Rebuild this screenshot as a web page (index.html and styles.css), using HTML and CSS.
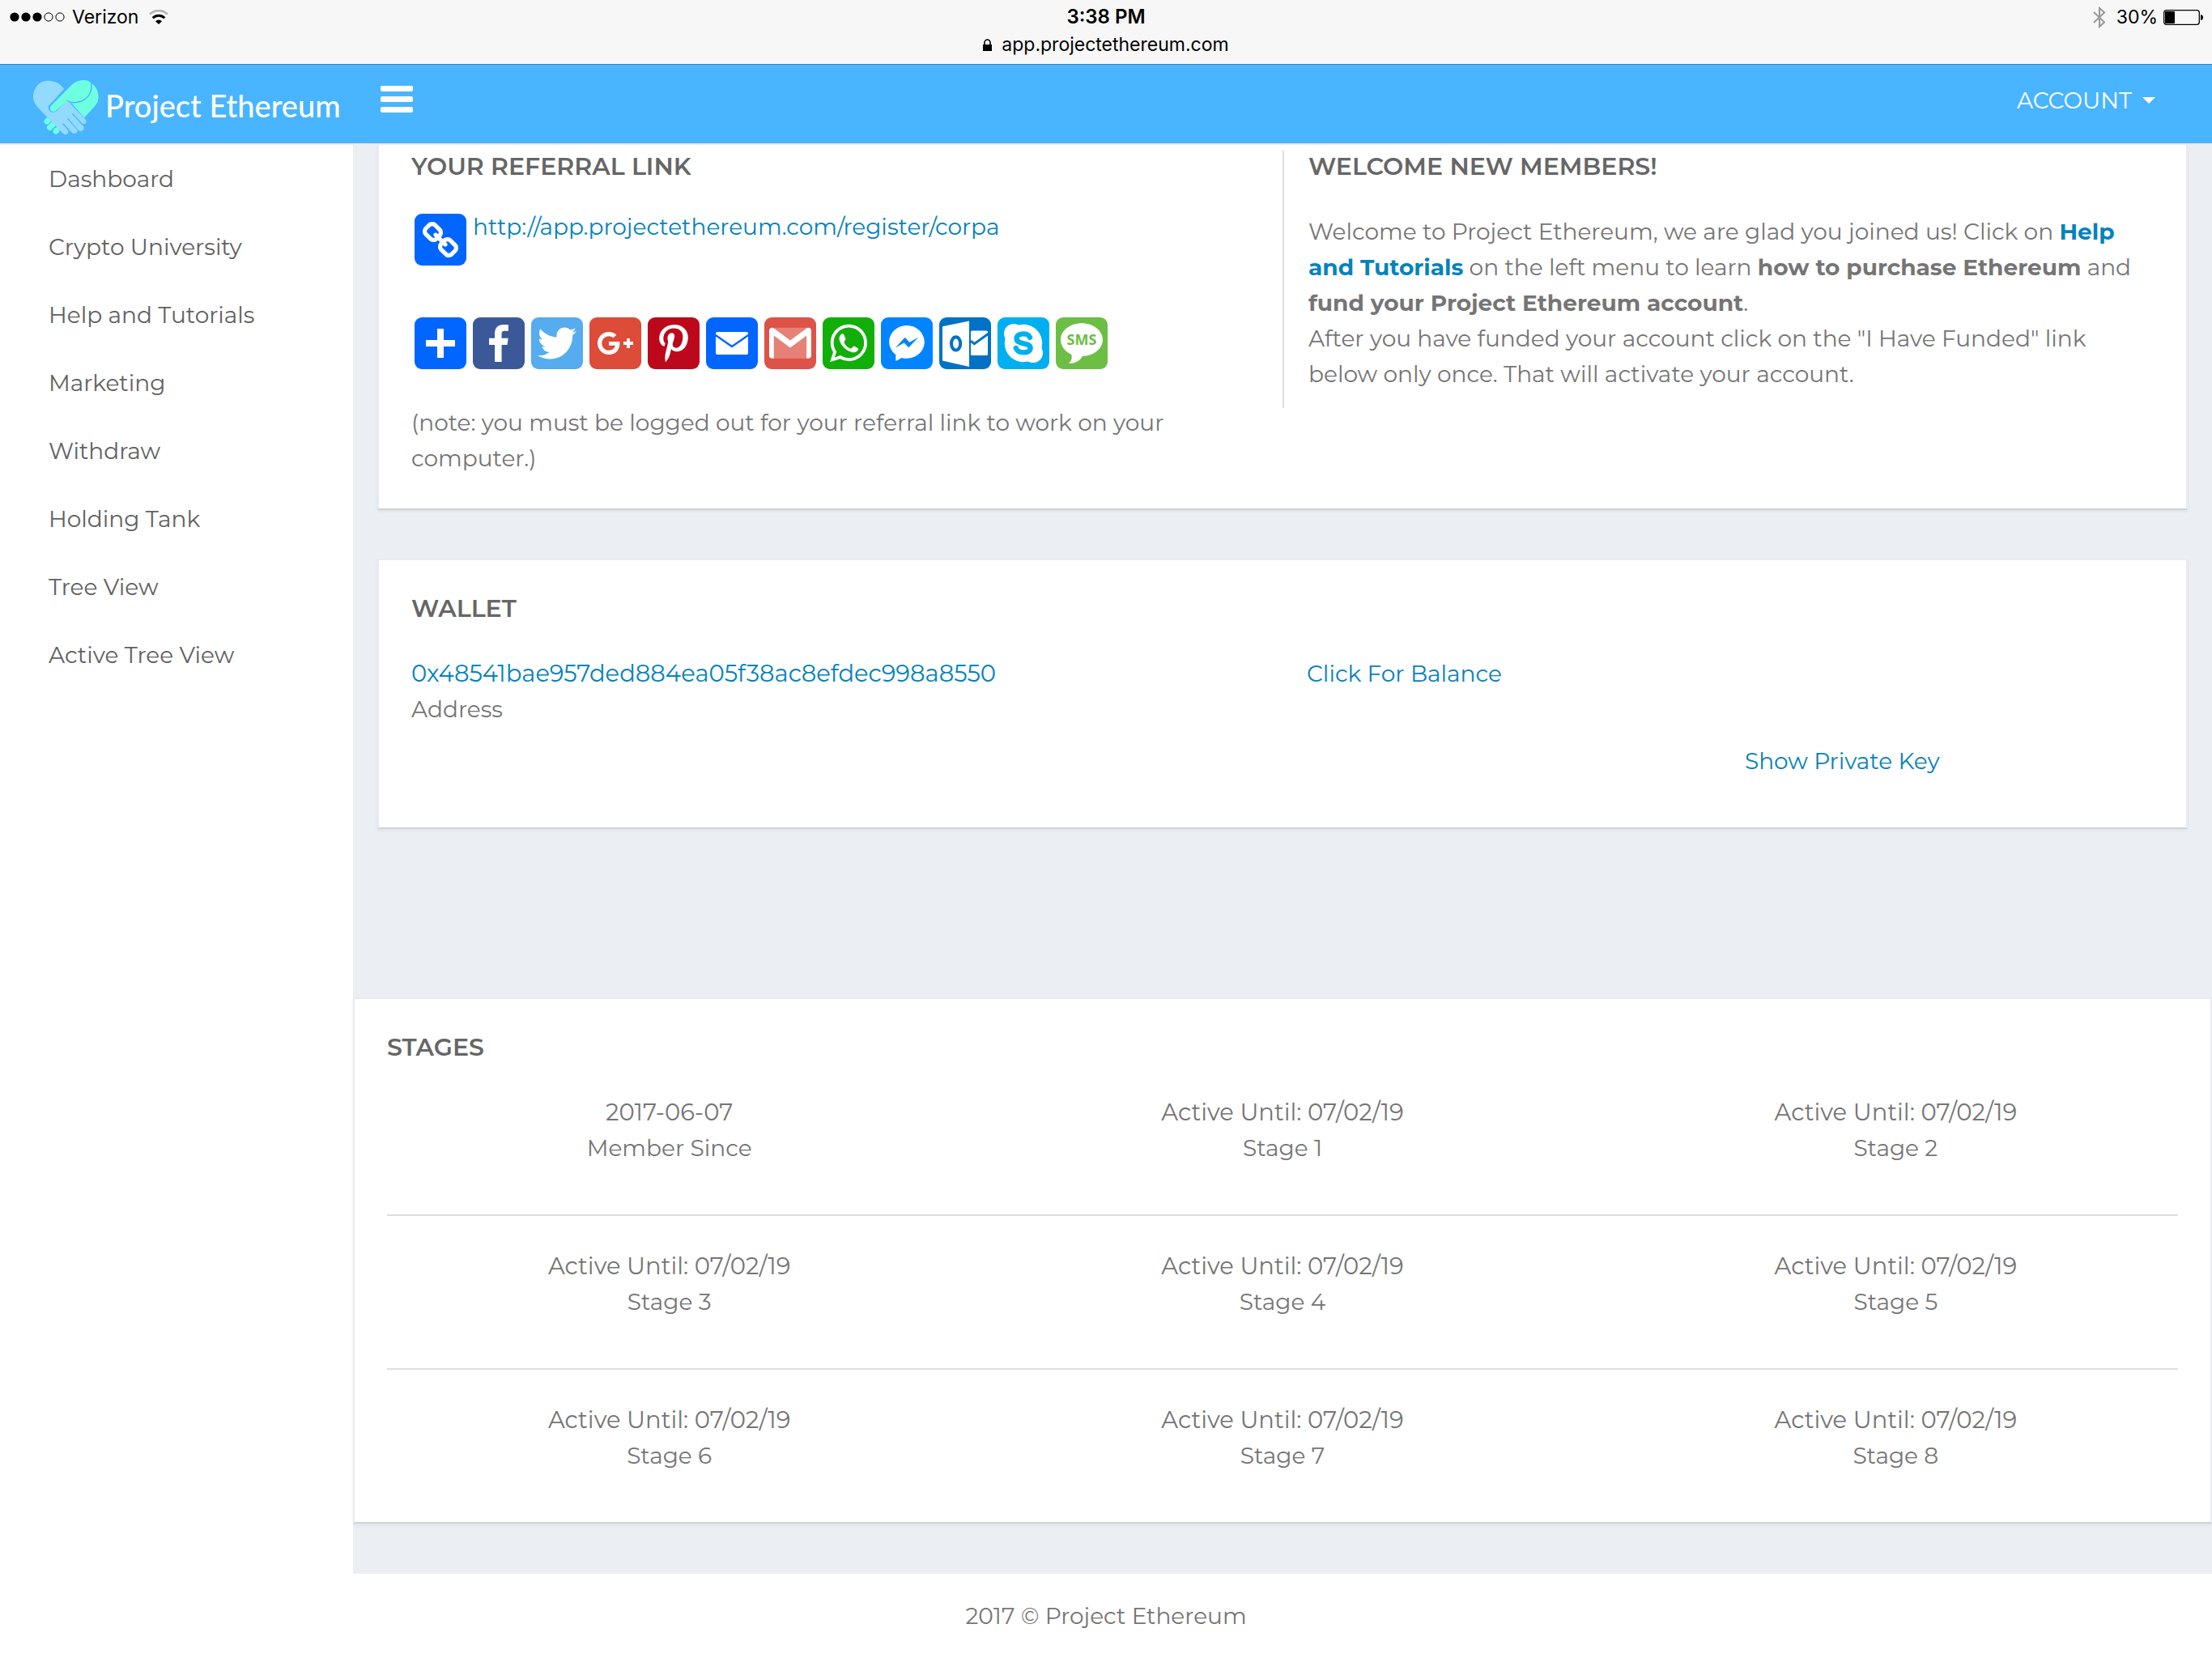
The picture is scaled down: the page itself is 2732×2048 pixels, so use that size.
FILE: index.html
```html
<!DOCTYPE html>
<html lang="en">
<head>
<meta charset="utf-8">
<title>Project Ethereum</title>
<meta name="viewport" content="width=device-width, initial-scale=1">
<link rel="stylesheet" href="styles.css">
</head>
<body>
<div class="statusbar">
  <div class="status-left">
    <svg class="signal" viewBox="0 0 68 12" aria-hidden="true"><circle cx="6" cy="6" r="5.6"/><circle cx="20" cy="6" r="5.6"/><circle cx="34" cy="6" r="5.6"/><g fill="none" stroke="#000"><circle cx="48" cy="6" r="5.1"/><circle cx="62" cy="6" r="5.1"/></g></svg>
    <span>Verizon</span>
    <svg class="wifi" viewBox="0 0 24 18" aria-hidden="true"><path d="M8 14.2a5.6 5.6 0 0 1 8 0L12 18z"/><path d="M4.7 10.3a10.4 10.4 0 0 1 14.6 0" fill="none" stroke="#000" stroke-width="3"/><path d="M1 5.6a15.8 15.8 0 0 1 22 0" fill="none" stroke="#b4b4b4" stroke-width="2.6"/></svg>
  </div>
  <div class="status-center">
    <span class="time">3:38 PM</span>
    <span class="address"><svg class="lock" viewBox="0 0 11 15" aria-hidden="true"><path d="M0 7h11v8H0z"/><path d="M2 8V4.5a3.5 3.5 0 0 1 7 0V8" fill="none" stroke="#000" stroke-width="1.6"/></svg>app.projectethereum.com</span>
  </div>
  <div class="status-right">
    <svg class="bluetooth" viewBox="0 0 16 27" aria-hidden="true"><path d="M1 7l13 12.500-6 5.500V2l6 5.500L1 20" fill="none" stroke="#999" stroke-width="2"/></svg>
    <span>30%</span>
    <svg class="battery" viewBox="0 0 49 19" aria-hidden="true"><rect x=".7" y=".7" width="43.600" height="17.600" rx="3" fill="none" stroke="#000" stroke-width="1.300"/><rect x="2" y="2" width="12" height="15" rx="1"/><path d="M46 6c2 .3 3 1.500 3 3.500s-1 3.200-3 3.500z"/></svg>
  </div>
</div>

<header class="topbar">
  <a class="brand" href="#">
    <svg class="brand-mark" viewBox="0 0 81 68" aria-hidden="true">
      <g fill="#6effe0"><path d="M41 27 27 38.500c-5 2-8-3-5-7L48 5.500C54 0 66-3 72 4c8 5 12 18 5 27L63 46.500 48 29z"/></g>
      <path d="M71.500 4c2 10-3 18-12 22-6 2.500-14 2.500-18-1" fill="none" stroke="#49b4ff" stroke-width="1.500"/>
      <g stroke="#6effe0" stroke-width="7" stroke-linecap="round"><path d="M17 51l1-1M20.500 58.500l4-4M28 63l1-1"/></g>
      <path fill="#93daff" d="M38 11C31-1 11-3 4 8c-6 8-5 18 1 25l32 33c3 3 8 0 6-4l-7-8 1-1 11 12c4 3 8-1 6-4L42 48l1-1 13 15c4 3 8-1 6-5L48 42l1-1 11 12c3 3 7 0 5-4L43 26l-3 1-11 11c-5 4-12 0-10-6z"/>
    </svg>
    <span class="brand-name">Project Ethereum</span>
  </a>
  <button class="menu-toggle" type="button" aria-label="Toggle menu"><span></span><span></span><span></span></button>
  <button class="account" type="button">ACCOUNT<span class="caret"></span></button>
</header>

<div class="layout">
  <nav class="sidebar">
    <a href="#">Dashboard</a>
    <a href="#">Crypto University</a>
    <a href="#">Help and Tutorials</a>
    <a href="#">Marketing</a>
    <a href="#">Withdraw</a>
    <a href="#">Holding Tank</a>
    <a href="#">Tree View</a>
    <a href="#">Active Tree View</a>
  </nav>

  <main class="content">
    <section class="card card-intro">
      <div class="columns">
        <div class="column">
          <h2>YOUR REFERRAL LINK</h2>
          <div class="referral">
            <a class="tile blue" href="#" aria-label="Copy link"><svg viewBox="0 0 32 32"><path d="M24.412 21.177c0-.36-.126-.665-.377-.917l-2.804-2.804a1.235 1.235 0 0 0-.913-.378c-.377 0-.7.144-.97.43.026.028.11.11.255.25.144.14.24.236.29.29s.117.14.2.256c.087.117.146.232.177.344.03.112.046.236.046.37 0 .36-.126.666-.377.918a1.25 1.25 0 0 1-.918.377 1.4 1.4 0 0 1-.373-.047 1.062 1.062 0 0 1-.345-.175 2.268 2.268 0 0 1-.256-.2 6.815 6.815 0 0 1-.29-.29c-.14-.142-.223-.23-.25-.254-.297.28-.445.607-.445.984 0 .36.126.664.377.916l2.778 2.79c.243.243.548.364.917.364.36 0 .665-.118.917-.35l1.982-1.97c.252-.25.378-.55.378-.9zm-9.477-9.504c0-.36-.126-.665-.377-.917l-2.777-2.79a1.235 1.235 0 0 0-.913-.378c-.35 0-.656.12-.917.364L7.967 9.92c-.254.252-.38.553-.38.903 0 .36.126.665.38.917l2.802 2.804c.242.243.547.364.916.364.377 0 .7-.14.97-.418-.026-.027-.11-.11-.255-.25s-.24-.235-.29-.29a2.675 2.675 0 0 1-.2-.255 1.052 1.052 0 0 1-.176-.344 1.396 1.396 0 0 1-.047-.37c0-.36.126-.662.377-.914.252-.252.557-.377.917-.377.136 0 .26.015.37.046.114.03.23.09.346.175.117.085.202.153.256.2.054.05.15.148.29.29.14.146.222.23.25.258.294-.278.442-.606.442-.983zM27 21.177c0 1.078-.382 1.99-1.146 2.736l-1.982 1.968c-.745.75-1.658 1.12-2.736 1.12-1.087 0-2.004-.38-2.75-1.143l-2.777-2.79c-.75-.747-1.12-1.66-1.12-2.737 0-1.106.392-2.046 1.183-2.818l-1.186-1.185c-.774.79-1.708 1.186-2.805 1.186-1.078 0-1.995-.376-2.75-1.13l-2.803-2.81C5.377 12.82 5 11.903 5 10.826c0-1.08.382-1.993 1.146-2.738L8.128 6.12C8.873 5.372 9.785 5 10.864 5c1.087 0 2.004.382 2.75 1.146l2.777 2.79c.75.747 1.12 1.66 1.12 2.737 0 1.105-.392 2.045-1.183 2.817l1.186 1.186c.774-.79 1.708-1.186 2.805-1.186 1.078 0 1.995.377 2.75 1.132l2.804 2.804c.754.755 1.13 1.672 1.13 2.75z"/></svg></a>
            <a class="referral-url" href="#">http://app.projectethereum.com/register/corpa</a>
          </div>
          <div class="share">
            <a class="tile blue" href="#" aria-label="Share"><svg viewBox="0 0 32 32"><path d="M14 7h4v18h-4z"/><path d="M7 14h18v4H7z"/></svg></a>
            <a class="tile facebook" href="#" aria-label="Facebook"><svg viewBox="0 0 32 32"><path d="M17.780 27.500V17.008h3.522l.527-4.090h-4.050v-2.610c0-1.182.33-1.990 2.023-1.990h2.166V4.660c-.375-.05-1.660-.16-3.155-.16-3.123 0-5.260 1.905-5.260 5.405v3.016h-3.530v4.090h3.530V27.500h4.223z"/></svg></a>
            <a class="tile twitter" href="#" aria-label="Twitter"><svg viewBox="0 0 32 32"><path d="M28 8.557a9.913 9.913 0 0 1-2.828.775 4.930 4.930 0 0 0 2.166-2.725 9.738 9.738 0 0 1-3.130 1.194 4.920 4.920 0 0 0-3.593-1.550 4.924 4.924 0 0 0-4.794 6.049c-4.090-.21-7.720-2.170-10.150-5.150a4.942 4.942 0 0 0-.665 2.477c0 1.710.87 3.214 2.190 4.100a4.968 4.968 0 0 1-2.230-.616v.06c0 2.390 1.700 4.380 3.952 4.830-.414.115-.85.174-1.297.174-.318 0-.626-.03-.928-.086a4.935 4.935 0 0 0 4.600 3.420 9.893 9.893 0 0 1-6.114 2.107c-.398 0-.79-.023-1.175-.068a13.953 13.953 0 0 0 7.550 2.213c9.056 0 14.010-7.507 14.010-14.013 0-.213-.005-.426-.015-.637.96-.695 1.795-1.560 2.455-2.550z"/></svg></a>
            <a class="tile google" href="#" aria-label="Google Plus"><svg viewBox="0 0 32 32"><path d="M27 15h-2v-2h-2v2h-2v2h2v2h2v-2h2m-15-2v2.400h3.970c-.16 1.030-1.200 3.020-3.970 3.020-2.390 0-4.340-1.980-4.340-4.420s1.950-4.420 4.340-4.420c1.360 0 2.270.58 2.790 1.080l1.900-1.830C15.470 9.690 13.890 9 12 9c-3.870 0-7 3.130-7 7s3.130 7 7 7c4.040 0 6.720-2.840 6.720-6.840 0-.46-.05-.81-.11-1.160H12z"/></svg></a>
            <a class="tile pinterest" href="#" aria-label="Pinterest"><svg viewBox="0 0 32 32"><path d="M16.539 4.500c-6.277 0-9.442 4.500-9.442 8.253 0 2.272.86 4.293 2.705 5.046.303.125.574.005.662-.33.061-.231.205-.816.27-1.060.088-.331.053-.447-.191-.736-.532-.627-.873-1.439-.873-2.591 0-3.338 2.498-6.327 6.505-6.327 3.548 0 5.497 2.168 5.497 5.062 0 3.810-1.686 7.025-4.188 7.025-1.382 0-2.416-1.142-2.085-2.545.397-1.674 1.166-3.480 1.166-4.689 0-1.081-.581-1.983-1.782-1.983-1.413 0-2.548 1.462-2.548 3.419 0 1.247.421 2.091.421 2.091l-1.699 7.199c-.505 2.137-.076 4.755-.039 5.019.021.158.223.196.314.077.13-.17 1.813-2.247 2.384-4.324.162-.587.929-3.631.929-3.631.46.876 1.801 1.646 3.227 1.646 4.247 0 7.128-3.871 7.128-9.053.003-3.918-3.317-7.568-8.361-7.568z"/></svg></a>
            <a class="tile blue" href="#" aria-label="Email"><svg viewBox="0 0 32 32"><rect x="6" y="9" width="20" height="14" rx="1"/><path d="M5.500 10.800 16 18l10.500-7.200" fill="none" stroke="#06f" stroke-width="1.200"/></svg></a>
            <a class="tile gmail" href="#" aria-label="Gmail"><svg viewBox="0 0 32 32"><path opacity=".27" d="M5.500 6.400h21v19h-21z"/><path d="M4.800 6.400c-1 0-1.800.8-1.800 1.800v15.400c0 1 .8 1.800 1.800 1.800h1.100V11.300L16 18.700l10.100-7.400v14.100h1.100c1 0 1.800-.8 1.800-1.800V8.200c0-1-.8-1.800-1.800-1.800-.5 0-.8.1-1.100.3L16 14.300 5.900 6.700c-.3-.2-.6-.3-1.100-.3z"/></svg></a>
            <a class="tile whatsapp" href="#" aria-label="WhatsApp"><svg viewBox="0 0 32 32"><path fill-rule="evenodd" d="M16.210 4.410C9.973 4.410 4.917 9.465 4.917 15.700c0 2.134.592 4.130 1.620 5.832L4.500 27.590l6.250-2.002a11.241 11.241 0 0 0 5.460 1.404c6.234 0 11.290-5.055 11.290-11.290 0-6.237-5.056-11.292-11.290-11.292zm0 20.690c-1.910 0-3.690-.57-5.173-1.553l-3.610 1.156 1.173-3.490a9.345 9.345 0 0 1-1.790-5.512c0-5.180 4.217-9.400 9.400-9.400 5.183 0 9.397 4.220 9.397 9.400 0 5.188-4.214 9.400-9.398 9.400z"/><path d="M11.200 10.700c.4-.6 1.500-.8 1.900-.1l1.100 2.600c.2.700-1 1.500-1 2 .5 1.700 2.400 3.500 4.300 4.100.6.100 1.300-1.600 1.900-1.500l2.500 1.300c.4.3.1 1-.2 1.400-1 1.200-2.700 1.400-4.100.9-3.500-1.200-6.300-4.100-7.200-7.300-.3-1.200-.1-2.500.8-3.400z"/></svg></a>
            <a class="tile messenger" href="#" aria-label="Messenger"><svg viewBox="0 0 32 32"><path fill-rule="evenodd" d="M16 5C9.986 5 5.110 9.560 5.110 15.182c0 3.200 1.580 6.054 4.046 7.920V27l3.716-2.060c.99.276 2.040.425 3.128.425 6.014 0 10.890-4.560 10.890-10.183S22.013 5 16 5zm1.147 13.655L14.330 15.730l-5.423 3 5.946-6.310 2.816 2.925 5.420-3-5.946 6.310z"/></svg></a>
            <a class="tile outlook" href="#" aria-label="Outlook"><svg viewBox="0 0 32 32"><path d="M2 5.600 18.500 2.300v28.200L2 26.800z"/><rect x="19.500" y="8.300" width="10.500" height="15.200" rx=".8"/><ellipse cx="10.300" cy="16.200" rx="2.800" ry="4.100" fill="none" stroke="#0072c6" stroke-width="2"/><path d="M19.500 14.600l2.200 1.700L30.500 10" fill="none" stroke="#0072c6" stroke-width="1.500"/></svg></a>
            <a class="tile skype" href="#" aria-label="Skype"><svg viewBox="0 0 32 32"><circle cx="16" cy="16" r="11.600"/><circle cx="10" cy="10" r="6"/><circle cx="22" cy="22" r="6"/><path d="M20 12.400c-.6-1.500-2-2.200-3.900-2.200-2.300 0-4.300.9-4.300 2.900 0 4.200 8.500 1.900 8.500 5.900 0 1.900-2 2.700-4.300 2.700-2.600 0-4-1.100-4.600-2.700" fill="none" stroke="#00aff0" stroke-width="3.200" stroke-linecap="round"/></svg></a>
            <a class="tile sms" href="#" aria-label="SMS"><svg viewBox="0 0 32 32"><path d="M16 3.600c7.200 0 13 4.600 13 10.200S23.200 24 16.400 24c-1.500 3-4.800 4.700-8.600 4.400 2-1.200 2.500-3.400 1.700-5.600C5.600 21.200 3 17.800 3 13.800 3 8.200 8.800 3.600 16 3.600z"/><text class="sms-label" x="16" y="17" text-anchor="middle">SMS</text></svg></a>
          </div>
          <p>(note: you must be logged out for your referral link to work on your<br>computer.)</p>
        </div>
        <div class="column column-ruled">
          <h2>WELCOME NEW MEMBERS!</h2>
          <p>Welcome to Project Ethereum, we are glad you joined us! Click on <a href="#"><b>Help<br>and Tutorials</b></a> on the left menu to learn <b>how to purchase Ethereum</b> and<br><b>fund your Project Ethereum account</b>.<br>After you have funded your account click on the "I Have Funded" link<br>below only once. That will activate your account.</p>
        </div>
      </div>
    </section>

    <section class="card card-wallet">
      <h2>WALLET</h2>
      <div class="columns">
        <div class="column">
          <a class="value" href="#">0x48541bae957ded884ea05f38ac8efdec998a8550</a>
          <p>Address</p>
        </div>
        <div class="column">
          <a href="#">Click For Balance</a>
        </div>
      </div>
      <div class="columns key-row">
        <div class="key"><a href="#">Show Private Key</a></div>
      </div>
    </section>

    <section class="card card-stages">
      <h2>STAGES</h2>
      <div class="stage-row">
        <p><span class="value">2017-06-07</span><br>Member Since</p>
        <p><span class="value">Active Until: 07/02/19</span><br>Stage 1</p>
        <p><span class="value">Active Until: 07/02/19</span><br>Stage 2</p>
      </div>
      <hr>
      <div class="stage-row">
        <p><span class="value">Active Until: 07/02/19</span><br>Stage 3</p>
        <p><span class="value">Active Until: 07/02/19</span><br>Stage 4</p>
        <p><span class="value">Active Until: 07/02/19</span><br>Stage 5</p>
      </div>
      <hr>
      <div class="stage-row">
        <p><span class="value">Active Until: 07/02/19</span><br>Stage 6</p>
        <p><span class="value">Active Until: 07/02/19</span><br>Stage 7</p>
        <p><span class="value">Active Until: 07/02/19</span><br>Stage 8</p>
      </div>
    </section>
  </main>
</div>

<footer class="footer">2017 © Project Ethereum</footer>
</body>
</html>
```
FILE: styles.css
```css
* { box-sizing: border-box; }

body {
  margin: 0;
  background: #fff;
  color: #757575;
  font-family: "Montserrat", "Inter", sans-serif;
  font-size: 28px;
  line-height: 44px;
}

a { color: #0582bb; text-decoration: none; }
p, h2 { margin: 0; }
button { border: 0; background: none; padding: 0; font: inherit; color: inherit; cursor: pointer; }
svg { display: block; }

/* Tablet status bar */
.statusbar {
  display: grid;
  grid-template-columns: 1fr auto 1fr;
  height: 80px;
  border-bottom: 1px solid #3a7fb5;
  background: #f7f7f7;
  color: #000;
  font-family: "Inter", sans-serif;
  font-size: 23px;
  line-height: 42px;
}
.status-left, .status-right { display: flex; align-items: center; height: 42px; }
.status-left { gap: 9px; padding-left: 12px; }
.status-right { justify-content: flex-end; gap: 7px; padding-right: 11px; }
.signal { width: 68px; height: 12px; }
.wifi { width: 24px; height: 18px; margin-left: 4px; }
.bluetooth { width: 16px; height: 27px; margin-right: 6px; }
.battery { width: 49px; height: 19px; }
.status-center { display: flex; flex-direction: column; align-items: center; }
.time { font-size: 24px; font-weight: 600; }
.address { display: flex; align-items: center; gap: 12px; line-height: 26px; }
.lock { width: 11px; height: 15px; }

/* Top bar */
.topbar {
  display: flex;
  align-items: flex-start;
  height: 99px;
  padding: 0 70px 0 41px;
  border-bottom: 2px solid #e9ebee;
  background: #49b4ff;
  color: #fff;
}
.brand { display: flex; align-items: center; gap: 8px; width: 429px; padding-top: 19px; color: #fff; }
.brand-mark { width: 81px; height: 68px; }
.brand-name { padding-bottom: 6px; font-family: "Lato", sans-serif; font-size: 38px; font-weight: 500; white-space: nowrap; }
.menu-toggle { display: flex; flex-direction: column; gap: 6px; margin-top: 26px; }
.menu-toggle span { width: 40px; height: 7px; border-radius: 2px; background: #fff; }
.account { display: flex; align-items: center; gap: 13px; margin: 22px 0 0 auto; }
.caret { border: 8px solid transparent; border-top-color: #fff; border-bottom: 0; }

/* Page body */
.layout { display: flex; }
.sidebar { flex: 0 0 436px; display: flex; flex-direction: column; }
.sidebar a { padding: 20px 60px; color: #616161; }

.content { flex: 1; min-width: 0; padding-bottom: 62px; background: #ebeff4; }

.card {
  margin: 0 30px 60px;
  padding: 40px;
  border: 2px solid #e7eaf3;
  border-bottom-color: #d1d3d5;
  background: #fff;
  box-shadow: 0 2px 4px rgba(0, 0, 0, 0.05);
}
.card h2 { margin-bottom: 38px; color: #666; font-size: 30px; font-weight: 600; line-height: 40px; }
.card-intro { padding-top: 7px; border-top: 0; }
.card-wallet { margin-bottom: 208px; }
.card-stages { margin: 0; padding-bottom: 0; }

.columns { display: grid; grid-template-columns: 1fr 1fr; align-items: start; margin: 0 -30px; }
.column { padding: 0 30px; }
.column-ruled { padding-bottom: 20px; border-left: 2px solid #dedede; }
.value { font-size: 29px; }

.referral { display: flex; gap: 8px; margin-bottom: 64px; padding-left: 4px; }
.referral-url { line-height: 32px; }
.share { display: flex; gap: 8px; margin-bottom: 44px; padding-left: 4px; }

.tile { width: 64px; height: 64px; border-radius: 9px; overflow: hidden; }
.tile svg { width: 64px; height: 64px; fill: #fff; }
.blue { background: #0166ff; }
.facebook { background: #3b5998; }
.twitter { background: #55acee; }
.google { background: #dd4b39; }
.pinterest { background: #bd081c; }
.gmail { background: #dd5347; }
.whatsapp { background: #12af0a; }
.messenger { background: #0084ff; }
.outlook { background: #0072c6; }
.skype { background: #00aff0; }
.sms { background: #6cbe45; }
.sms-label { fill: #6cbe45; font: 700 9px "Open Sans", sans-serif; }

.key-row { padding: 20px 0; }
.key { grid-column: 2; margin-left: 25%; text-align: center; }

.stage-row { display: grid; grid-template-columns: repeat(3, 1fr); margin: 0 -30px; padding-bottom: 60px; text-align: center; }
.card-stages hr { height: 2px; margin: 0 0 40px; border: 0; background: #dedede; }

.footer { padding: 30px; text-align: center; }
```
